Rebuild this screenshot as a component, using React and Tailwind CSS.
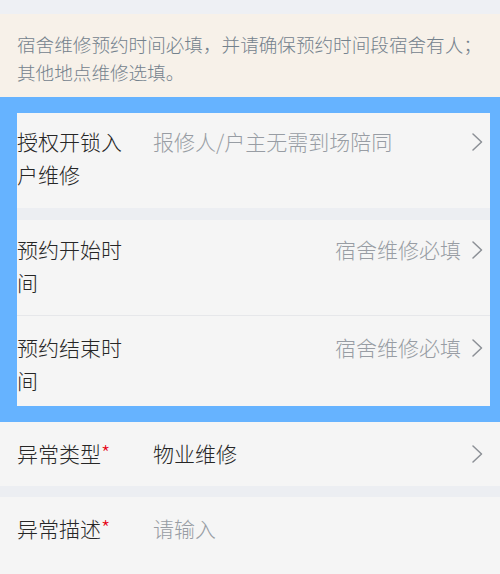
const Chevron = () => (
    <svg width="12" height="18" viewBox="0 0 12 18" className="shrink-0">
        <path d="M2 1 L10.5 9 L2 17" fill="none" stroke="#8c9096" strokeWidth="1.5" strokeLinecap="round" strokeLinejoin="round" />
    </svg>
);

const Fila = ({ label, valor, placeholder, derecha, flecha, requerido, className }) => (
    <div className={`flex items-start ${className}`}>
        <div className="w-[116px] shrink-0 text-[#262626]">
            {label}
            {requerido && <span className="text-[#e60012]">*</span>}
        </div>
        <div className={`ml-[20px] flex-1 ${derecha ? 'text-right' : 'text-left'} ${valor ? 'text-[#262626]' : 'text-[#989da4]'}`}>
            {valor || placeholder}
        </div>
        {flecha && (
            <div className="ml-[10px] flex h-[33px] items-center">
                <Chevron />
            </div>
        )}
    </div>
);

export default function App() {
    return (
        <div className="h-[574px] w-[500px] overflow-hidden bg-[#f5f5f5] text-[21px] leading-[33px] font-light" style={{ fontFamily: '"Noto Sans CJK SC", "Noto Sans", sans-serif' }}>
            {/* franja superior */}
            <div className="h-[14px] bg-[#eef0f4]"></div>

            {/* aviso */}
            <div className="bg-[#f7f1e9] px-[17px] pt-[16px] pb-[11px] text-[18.6px] leading-[28px] text-[#74828d]">
                宿舍维修预约时间必填，并请确保预约时间段宿舍有人；
                <br />
                其他地点维修选填。
            </div>

            {/* bloque resaltado */}
            <div className="border-t-[16px] border-r-[10px] border-b-[16px] border-l-[17px] border-[#66b3ff] bg-[#f5f5f5]">
                <Fila
                    className="h-[95px] pt-[12px] pr-[7px]"
                    label="授权开锁入户维修"
                    placeholder="报修人/户主无需到场陪同"
                    flecha
                />
                <div className="h-[12px] bg-[#eceef2]"></div>
                <Fila
                    className="h-[96px] pt-[13px] pr-[7px] border-b border-[#e6e7ea]"
                    label="预约开始时间"
                    placeholder="宿舍维修必填"
                    derecha
                    flecha
                />
                <Fila
                    className="h-[90px] pt-[15px] pr-[7px]"
                    label="预约结束时间"
                    placeholder="宿舍维修必填"
                    derecha
                    flecha
                />
            </div>

            <Fila
                className="h-[64px] pt-[15px] pl-[17px] pr-[17px]"
                label="异常类型"
                requerido
                valor="物业维修"
                flecha
            />
            <div className="h-[11px] bg-[#eceef2]"></div>
            <Fila
                className="h-[76px] pt-[15px] pl-[17px] pr-[17px]"
                label="异常描述"
                requerido
                placeholder="请输入"
            />
        </div>
    );
}
